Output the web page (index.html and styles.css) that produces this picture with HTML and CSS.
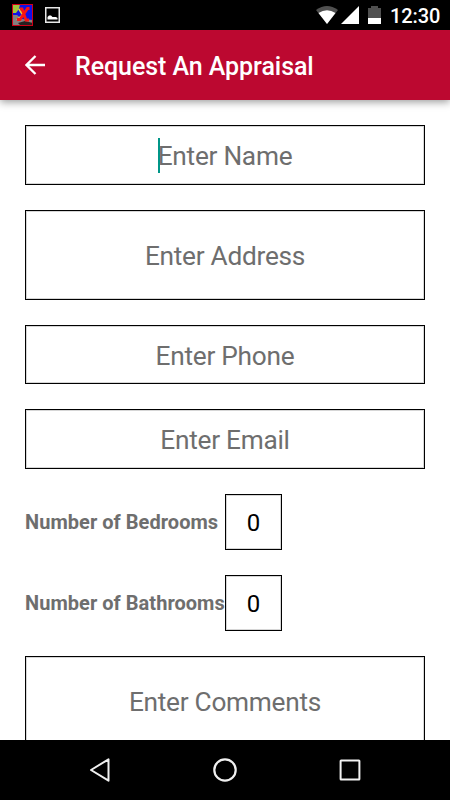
FILE: index.html
```html
<!DOCTYPE html>
<html lang="en">
<head>
<meta charset="utf-8">
<title>Request An Appraisal</title>
<link rel="stylesheet" href="styles.css">
</head>
<body>
<div class="screen">
  <header class="status">
    <svg class="app-icon" width="21" height="22" viewBox="0 0 21 22">
      <rect width="21" height="22" fill="#1010e8"/>
      <path d="M0 0h8L7 5 4 9H0z" fill="#a3c73c"/>
      <path d="M0 11h5l5 4 11 1v6H0z" fill="#858080"/>
      <path d="M6 19l7-2 8 2v3H9z" fill="#262020"/>
      <path d="M7 5l4 6-6 5" fill="none" stroke="#e8d33c" stroke-width="2"/>
      <path d="M8 5h2l4 11h3M17.500 4.500h-2L8 15.500H5" fill="none" stroke="#f81414" stroke-width="2.800"/>
      <rect x=".5" y=".5" width="20" height="21" fill="none" stroke="#d00018"/>
    </svg>
    <svg class="photo-icon" width="15" height="16" viewBox="0 0 15 16">
      <rect x=".75" y=".75" width="13.500" height="14.500" fill="none" stroke="#e8e8e8" stroke-width="1.500"/>
      <path d="M2.500 12.500V10L4 8.500h2L7.500 10H11l1.500 1v1.500z" fill="#fff"/>
    </svg>
    <span class="spacer"></span>
    <svg class="wifi" width="22" height="18" viewBox="0 0 22 18">
      <path d="M0 4Q11-3.800 22 4L11 18z" fill="#505050"/>
      <path d="M2.500 7Q11 1.500 19.500 7L11 18z" fill="#fff"/>
    </svg>
    <svg class="signal" width="18" height="18" viewBox="0 0 18 18"><path d="M18 0v18H0z" fill="#fff"/></svg>
    <svg class="battery" width="13" height="18" viewBox="0 0 13 18">
      <path d="M0 2h3V0h7v2h3v10H0z" fill="#505050"/><path d="M0 12h13v6H0z" fill="#fff"/>
    </svg>
    <span class="clock">12:30</span>
  </header>
  <div class="toolbar">
    <svg class="back" width="20" height="20" viewBox="0 0 20 20"><path d="M20 10H2M10.500 1L1.500 10l9 9" fill="none" stroke="#fff" stroke-width="2.300"/></svg>
    <h1 class="title">Request An Appraisal</h1>
  </div>
  <main class="form">
    <div class="field name"><span class="hint"><i class="caret"></i>Enter Name</span></div>
    <div class="field address"><span class="hint">Enter Address</span></div>
    <div class="field phone"><span class="hint">Enter Phone</span></div>
    <div class="field email"><span class="hint">Enter Email</span></div>
    <div class="row bedrooms"><span class="label">Number of Bedrooms</span><div class="field count">0</div></div>
    <div class="row bathrooms"><span class="label">Number of Bathrooms</span><div class="field count">0</div></div>
    <div class="field comments"><span class="hint">Enter Comments</span></div>
  </main>
  <nav class="navbar">
    <svg width="24" height="26" viewBox="0 0 24 26"><path d="M22.500 2.300v21.400L5 13z" fill="none" stroke="#f0f0f0" stroke-width="2" stroke-linejoin="round"/></svg>
    <svg width="24" height="24" viewBox="0 0 24 24"><circle cx="12" cy="12" r="10.700" fill="none" stroke="#f0f0f0" stroke-width="2.200"/></svg>
    <svg width="22" height="22" viewBox="0 0 22 22"><rect x="1.600" y="1.600" width="18.800" height="18.800" rx=".5" fill="none" stroke="#f0f0f0" stroke-width="2"/></svg>
  </nav>
</div>
</body>
</html>
```
FILE: styles.css
```css
* { box-sizing: border-box; }
body { margin: 0; font-family: Roboto, sans-serif; background: #fff; }
.screen { width: 450px; height: 800px; display: flex; flex-direction: column; overflow: hidden; }
.status { height: 30px; flex: none; display: flex; background: #000; padding: 0 11px 0 12px; }
.app-icon { margin-top: 4px; }
.photo-icon { margin: 7px 0 0 12px; }
.spacer { flex: 1; }
.wifi { margin-top: 6px; }
.signal { margin: 6px 0 0 3px; }
.battery { margin: 6px 9px 0 9px; }
.clock { width: 49px; color: #fff; font-size: 20px; line-height: 32px; font-weight: 500; letter-spacing: -.1px; white-space: nowrap; }
.toolbar { height: 70px; flex: none; display: flex; align-items: center; background: #bc0830; padding-left: 25px; box-shadow: 0 2px 8px rgba(0,0,0,.4); z-index: 1; }
.title { margin: 2px 0 0 30px; color: #fff; font-size: 25px; font-weight: 500; letter-spacing: -.06px; white-space: nowrap; }
.form { flex: 1; min-height: 0; overflow: hidden; padding: 25px 25px 0; }
.field { display: flex; align-items: center; justify-content: center; border: 1px solid #000; box-shadow: inset 0 0 0 1px rgba(0,0,0,.16); color: #6e6e6e; font-size: 26.25px; }
.name { height: 60px; margin-bottom: 25px; }
.address { height: 90px; margin-bottom: 25px; }
.phone { height: 59px; margin-bottom: 25px; }
.email { height: 60px; margin-bottom: 25px; }
.hint { position: relative; padding-top: 2px; letter-spacing: -.27px; white-space: nowrap; }
.caret { position: absolute; left: 0; top: -1px; width: 2px; height: 35px; background: #009688; }
.row { display: flex; align-items: center; height: 56px; margin-bottom: 25px; }
.label { width: 200px; color: #6e6e6e; font-size: 20px; font-weight: 700; letter-spacing: .04px; white-space: nowrap; }
.count { width: 57px; height: 56px; padding-top: 2px; color: #000; font-size: 24px; }
.comments { height: 90px; }
.navbar { height: 60px; flex: none; display: flex; align-items: center; justify-content: space-between; background: #000; padding: 0 89px 0 86px; }
```
